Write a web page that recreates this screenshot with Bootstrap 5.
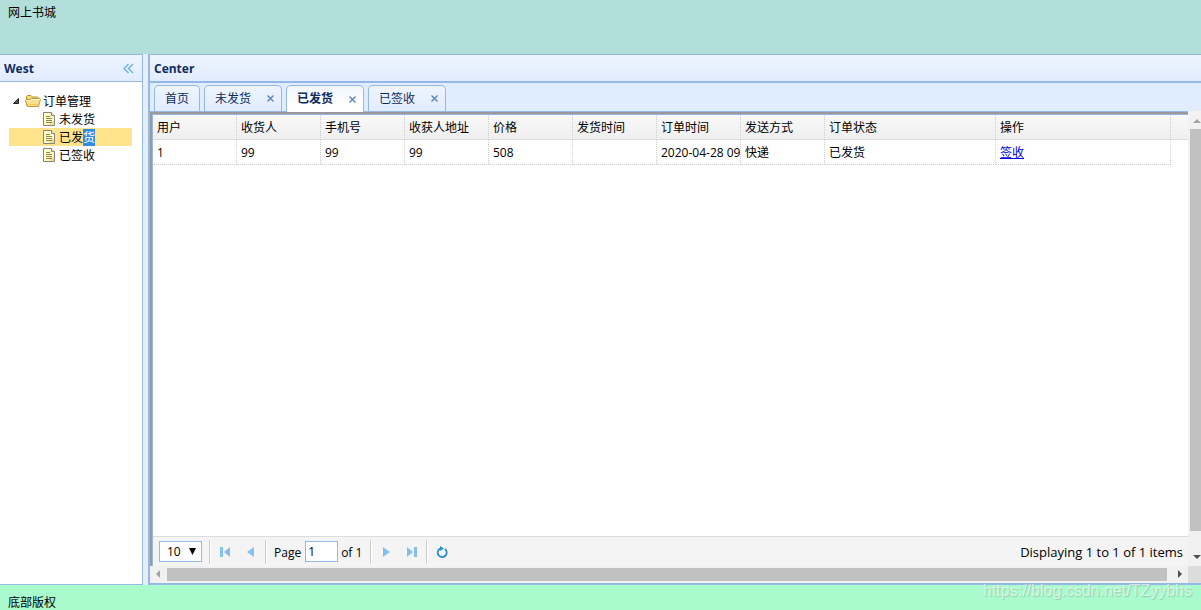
<!DOCTYPE html>
<html lang="zh-CN">
<head>
<meta charset="utf-8">
<meta name="viewport" content="width=device-width, initial-scale=1">
<title>网上书城</title>
<link href="https://cdn.jsdelivr.net/npm/bootstrap@5.3.0/dist/css/bootstrap.min.css" rel="stylesheet">
<style>
  :root { --line: #95b8e7; --ink: #0e2d5f; }
  body { font: 12px/18px "Open Sans", "Noto Sans CJK SC", sans-serif; color: #000; background: #e6eef8; }
  .north { height: 54px; background: #b3dfda; padding: 4px 8px; }
  .south { height: 25px; background: #a9facd; padding: 11px 8px 0; line-height: 14px; }
  .panel-title { height: 28px; padding: 2px 8px 0 4px; border-top: 1px solid var(--line); border-bottom: 1px solid var(--line);
    background: linear-gradient(#eff5ff, #e0ecff); color: var(--ink); font-weight: 700; }
  .west { width: 143px; border-right: 1px solid var(--line); border-bottom: 1px solid var(--line); }
  .center { margin-left: 5px; border-left: 2px solid var(--line); border-bottom: 2px solid var(--line); min-width: 0; }
  .center > .panel-title { border-bottom-width: 2px; height: 29px; }
  .tree { padding: 10px 10px 0 9px; }
  .tree > div { height: 18px; }
  .tree .leaf { padding-left: 34px; gap: 4px; }
  .tree a { color: #000; text-decoration: none; padding-top: 2px; }
  .tree .picked { background: #ffe48d; }
  .tree mark { padding: 0; background: #308ae8; color: #fff; }
  .tab-strip { height: 29px; padding: 2px 0 0 4px; gap: 4px; background: #e0ecff; border-bottom: 1px solid var(--line); }
  .tab-strip .nav-link { height: 26px; padding: 0 10px; border: 1px solid var(--line); border-bottom: 0; border-radius: 5px 5px 0 0; margin: 0;
    background: linear-gradient(#eff5ff, #e0ecff); color: var(--ink); gap: 16px; }
  .tab-strip .closable { padding-right: 7px; }
  .tab-strip .nav-link.active { font-weight: 700; height: 27px; background: linear-gradient(#eff5ff, #fff 70%); }
  .stage { border-left: 2px solid #999; border-top: 2px solid #999; }
  .grid-panel { border-left: 1px solid var(--line); border-top: 1px solid var(--line); background: #fff; min-width: 0; }
  .head-fill { background: linear-gradient(#f9f9f9, #efefef) 0 0 / 100% 24px no-repeat, linear-gradient(#ddd, #ddd) 0 24px / 100% 1px no-repeat; }
  .orders { width: 1018px; table-layout: fixed; border-collapse: separate; border-spacing: 0; }
  .orders th, .orders td { height: 25px; padding: 2px 0 0 4px; border-right: 1px dotted #ccc; font-weight: 400; white-space: nowrap; overflow: hidden; text-align: left; }
  .orders th { border-bottom: 1px solid #ddd; }
  .orders td { border-bottom: 1px dotted #ccc; }
  .orders a { color: #00e; }
  .pager { height: 30px; border-top: 1px solid #ddd; background: #f4f4f4; padding: 0 5px 0 6px; }
  .pager .sep { width: 2px; height: 24px; margin: 0 1px; border-left: 1px solid #ccc; border-right: 1px solid #fff; }
  .pager .btn { width: 26px; height: 26px; padding: 0 0 2px; border: 0; border-radius: 0; line-height: 1; }
  .pager select, .pager input { height: 21px; border: 1px solid var(--line); border-radius: 0; background: #fff; color: #000; padding: 0; }
  .pager select { width: 43px; padding-left: 7px; margin-right: 6px; appearance: none;
    background: #fff url("data:image/svg+xml,%3Csvg xmlns='http://www.w3.org/2000/svg' width='7' height='7'%3E%3Cpath d='M0 0h7L3.5 7z'/%3E%3C/svg%3E") no-repeat 29px 6px; }
  .pager input { width: 33px; padding-left: 2px; }
  .pager-text { font-size: 12px; padding-top: 2px; }
  .pager label { margin: 0 4px 0 6px; }
  .pager .total { margin: 0 7px 0 3px; }
  .pager .summary { font-size: 13px; padding-top: 0; }
  .bar-v { width: 13px; background: #f1f1f1; padding-left: 2px; margin-top: -1px; }
  .bar-v i, .bar-h i { background: #c1c1c1; }
  .bar-h { height: 17px; background: #f1f1f1; }
  .bar-h i { height: 13px; }
  .corner { width: 13px; background: #dcdcdc; }
  .watermark { right: 9px; bottom: 9px; font: 16px/20px "Liberation Sans", sans-serif; color: rgba(255,255,255,.6); text-shadow: 1px 1px 1px rgba(90,130,110,.35); }
</style>
</head>
<body class="vh-100 d-flex flex-column overflow-hidden position-relative">
<svg class="d-none">
  <symbol id="sheet" viewBox="0 0 12 14"><path fill="#fffcc4" stroke="#858585" d="M.5.5h8l3 3v10H.5z"/><path fill="#f0d27a" d="M8 9h3v4H6z" opacity=".7"/><path fill="#fff" stroke="#858585" d="M8.500.5v3h3"/><path stroke="#8c8753" d="M3 4.500h4M3 6.500h6M3 8.500h6M3 10.500h6"/></symbol>
</svg>
<header class="north flex-shrink-0">网上书城</header>

<main class="d-flex flex-grow-1" style="min-height:0">
  <aside class="west bg-white flex-shrink-0">
    <div class="panel-title d-flex align-items-center justify-content-between"><span>West</span>
      <button class="btn p-0 border-0 d-flex" aria-label="Collapse"><svg width="12" height="12" fill="none" stroke="#62b1e8" stroke-width="1.300"><path d="M6.500 1 2 5.500 6.500 10M11 1 6.500 5.500 11 10"/></svg></button>
    </div>
    <nav class="tree">
      <div class="d-flex align-items-center">
        <svg width="16" height="18"><path d="M4.500 11.500h5v-5z" fill="#555" stroke="#222"/></svg>
        <svg width="18" height="18"><path d="M1.500 13V4.500l1-1H6L7.500 5h5l1 1v8h-11z" fill="#f5d878" stroke="#b98f32"/><path d="M2.500 14.500 0.500 8.500l1-1H5L6.500 6.500H14.500l1 1-2 7z" fill="#fbe08a" stroke="#c09a3c"/><path d="M2 8.500h3.500L7 7.500h7.500" stroke="#fffbe0" fill="none"/><path d="M3 12.500h10" stroke="#f3cc5c"/></svg>
        <a href="#">订单管理</a>
      </div>
      <div class="leaf d-flex align-items-center"><svg width="12" height="14"><use href="#sheet"/></svg><a href="#">未发货</a></div>
      <div class="leaf picked d-flex align-items-center"><svg width="12" height="14"><use href="#sheet"/></svg><a href="#">已发<mark>货</mark></a></div>
      <div class="leaf d-flex align-items-center"><svg width="12" height="14"><use href="#sheet"/></svg><a href="#">已签收</a></div>
    </nav>
  </aside>

  <section class="center flex-grow-1 d-flex flex-column">
    <div class="panel-title d-flex align-items-center flex-shrink-0">Center</div>
    <div class="tab-strip d-flex flex-shrink-0">
      <button class="nav-link d-flex align-items-center">首页</button>
      <button class="nav-link closable d-flex align-items-center">未发货<svg width="7" height="7" stroke="#5b83c0" stroke-width="1.400"><path d="m.5.5 6 6m0-6-6 6"/></svg></button>
      <button class="nav-link closable active d-flex align-items-center">已发货<svg width="7" height="7" stroke="#5b83c0" stroke-width="1.400"><path d="m.5.5 6 6m0-6-6 6"/></svg></button>
      <button class="nav-link closable d-flex align-items-center">已签收<svg width="7" height="7" stroke="#5b83c0" stroke-width="1.400"><path d="m.5.5 6 6m0-6-6 6"/></svg></button>
    </div>
    <div class="d-flex flex-grow-1" style="min-height:0">
      <div class="stage d-flex flex-grow-1" style="min-width:0">
        <div class="grid-panel d-flex flex-column flex-grow-1">
          <div class="head-fill flex-grow-1 overflow-hidden">
            <table class="orders">
              <colgroup><col span="8" width="84"><col width="171"><col width="175"></colgroup>
              <thead><tr><th>用户</th><th>收货人</th><th>手机号</th><th>收获人地址</th><th>价格</th><th>发货时间</th><th>订单时间</th><th>发送方式</th><th>订单状态</th><th>操作</th></tr></thead>
              <tbody><tr><td>1</td><td>99</td><td>99</td><td>99</td><td>508</td><td></td><td>2020-04-28 09</td><td>快递</td><td>已发货</td><td><a href="#">签收</a></td></tr></tbody>
            </table>
          </div>
          <div class="pager d-flex align-items-center flex-shrink-0">
            <select aria-label="Page size"><option>10</option></select>
            <span class="sep"></span>
            <button class="btn" aria-label="First page"><svg width="10" height="10" fill="#82c1ee"><path d="M0 0h3v10H0zM10 0v10L4 5z"/></svg></button>
            <button class="btn" aria-label="Previous page"><svg width="8" height="10" fill="#82c1ee"><path d="M7 0v10L0 5z"/></svg></button>
            <span class="sep"></span>
            <label class="pager-text" for="page">Page</label>
            <input id="page" value="1">
            <span class="pager-text total">of 1</span>
            <span class="sep"></span>
            <button class="btn" aria-label="Next page"><svg width="8" height="10" fill="#82c1ee"><path d="M1 0v10l7-5z"/></svg></button>
            <button class="btn" aria-label="Last page"><svg width="10" height="10" fill="#82c1ee"><path d="M7 0h3v10H7zM0 0v10l6-5z"/></svg></button>
            <span class="sep"></span>
            <button class="btn" aria-label="Refresh"><svg width="12" height="12" fill="none" stroke="#2a8fd4" stroke-width="1.800"><path d="M9 3A4.500 4.500 0 1 1 4 2.600"/><path d="M4 0v5l4-2.500z" fill="#2a8fd4" stroke="none"/></svg></button>
            <span class="pager-text summary ms-auto">Displaying 1 to 1 of 1 items</span>
          </div>
        </div>
      </div>
      <div class="bar-v d-flex flex-column flex-shrink-0" aria-hidden="true">
        <svg width="11" height="18"><path d="M3 12h8L7 8z" fill="#a3a3a3"/></svg>
        <i class="flex-grow-1"></i>
        <svg width="11" height="35"><path d="M3 24h8l-4 4z" fill="#505050"/></svg>
      </div>
    </div>
    <div class="bar-h d-flex align-items-center flex-shrink-0" aria-hidden="true">
      <svg width="17" height="17"><path d="M10 4v8L6 8z" fill="#a3a3a3"/></svg>
      <i class="flex-grow-1"></i>
      <svg width="21" height="17"><path d="M11 4v8l4-4z" fill="#505050"/></svg>
      <span class="corner align-self-stretch"></span>
    </div>
  </section>
</main>

<footer class="south flex-shrink-0 overflow-hidden">底部版权</footer>
<div class="watermark position-absolute">https://blog.csdn.net/TZyybhs</div>
<script src="https://cdn.jsdelivr.net/npm/bootstrap@5.3.0/dist/js/bootstrap.bundle.min.js"></script>
</body>
</html>
